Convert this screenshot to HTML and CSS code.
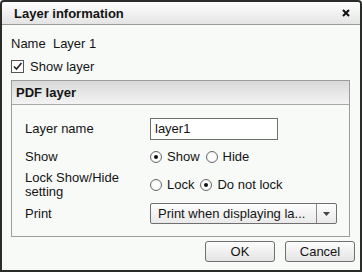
FILE: index.html
```html
<!DOCTYPE html>
<html>
<head>
<meta charset="utf-8">
<link rel="stylesheet" href="styles.css">
</head>
<body>
<div class="dialog">
  <div class="titlebar">
    <span class="title">Layer information</span>
    <svg class="close" width="8" height="8" viewBox="0 0 8 8"><path d="M1 1L7 7M7 1L1 7" stroke="#111" stroke-width="2"/></svg>
  </div>
  <div class="content">
    <div class="namerow">Name&nbsp;&nbsp;Layer 1</div>
    <div class="checkrow">
      <svg class="checkbox" width="13" height="13" viewBox="0 0 13 13"><rect x="0.5" y="0.5" width="12" height="12" fill="#fff" stroke="#555"/><path d="M3 6.5L5.5 9L10.5 3" fill="none" stroke="#222" stroke-width="1.6"/></svg>
      <span>Show layer</span>
    </div>
    <div class="group">
      <div class="group-head">PDF layer</div>
      <div class="group-body">
        <div class="row r1"><div class="label">Layer name</div><div class="textbox">layer1</div></div>
        <div class="row r2"><div class="label">Show</div>
          <div class="radios"><span class="radio on"></span><span class="rlabel">Show</span><span class="radio"></span><span class="rlabel">Hide</span></div>
        </div>
        <div class="row r3"><div class="label two">Lock Show/Hide<br>setting</div>
          <div class="radios"><span class="radio"></span><span class="rlabel">Lock</span><span class="radio on"></span><span class="rlabel">Do not lock</span></div>
        </div>
        <div class="row r4"><div class="label">Print</div>
          <div class="select"><span class="seltext">Print when displaying la...</span><span class="arrow"><svg width="7" height="4" viewBox="0 0 7 4"><path d="M0 0H7L3.5 4Z" fill="#444"/></svg></span></div>
        </div>
      </div>
    </div>
    <div class="buttons">
      <div class="btn">OK</div>
      <div class="btn">Cancel</div>
    </div>
  </div>
</div>
</body>
</html>
```
FILE: styles.css
```css
html, body { margin: 0; padding: 0; background: #fff; }
.dialog {
  width: 362px; height: 272px; box-sizing: border-box;
  border: 2px solid #2a2c2a; border-radius: 4px 4px 0 0;
  background: #f8faf8;
  font-family: "Liberation Sans", Arial, sans-serif; font-size: 13px; color: #141414;
  display: flex; flex-direction: column;
}
.titlebar {
  height: 22px; border-bottom: 1px solid #9a9a9a;
  background: linear-gradient(#fefefe, #e4e4e4);
  display: flex; align-items: center; justify-content: space-between;
  padding: 0 10px 0 12px; border-radius: 3px 3px 0 0;
}
.title { font-weight: bold; font-size: 13px; line-height: 16px; padding-top: 1px; }
.close { display: block; margin-top: -1px; }
.content { padding: 0 3px 0 9px; display: flex; flex-direction: column; }
.namerow { line-height: 16px; margin-top: 11px; }
.checkrow { display: flex; align-items: center; gap: 6px; margin-top: 6px; height: 16px; }
.checkbox { display: block; }
.group { margin-top: 6px; width: 339px; box-sizing: border-box; border: 1px solid #9c9c9c; }
.group-head {
  height: 23px; border-bottom: 1px solid #a8a8a8; box-sizing: border-box; height: 24px;
  background: linear-gradient(#d8d9d8, #f2f3f2);
  font-weight: bold; display: flex; align-items: center; padding-left: 4px;
}
.group-body { padding: 13px 12px 12px 13px; display: flex; flex-direction: column; }
.row { display: flex; align-items: center; }
.label { width: 125px; flex: none; line-height: 16px; }
.label.two { line-height: 14px; }
.r1 { height: 22px; }
.r2 { height: 20px; margin-top: 7px; }
.r3 { height: 28px; margin-top: 4px; }
.r4 { height: 21px; margin-top: 4px; }
.textbox {
  width: 128px; height: 22px; box-sizing: border-box; border: 1px solid #6f6f6f;
  background: #fff; padding-left: 4px; line-height: 20px;
}
.radios { display: flex; align-items: center; }
.radio {
  width: 12px; height: 12px; box-sizing: border-box; border-radius: 50%;
  border: 1px solid #6a6a6a; background: radial-gradient(#fff 40%, #e8e8e8);
  display: flex; align-items: center; justify-content: center; flex: none;
}
.radio.on::after { content: ""; width: 4px; height: 4px; border-radius: 50%; background: #111; }
.rlabel { margin-left: 5px; margin-right: 6px; line-height: 16px; }
.select {
  width: 188px; height: 21px; box-sizing: border-box; border: 1px solid #6f6f6f; border-radius: 2px;
  background: linear-gradient(#fdfdfd, #e9e9e9); display: flex; align-items: stretch;
}
.seltext { flex: 1; padding-left: 7px; line-height: 19px; }
.arrow { width: 19px; border-left: 1px solid #8a8a8a; display: flex; align-items: center; justify-content: center; }
.arrow svg { display: block; }
.buttons { display: flex; justify-content: flex-end; gap: 10px; margin-top: 4px; padding-right: 2px; }
.btn {
  width: 70px; height: 21px; box-sizing: border-box; border: 1px solid #707070; border-radius: 3px;
  background: linear-gradient(#fcfcfc, #e4e4e4); text-align: center; line-height: 19px;
}
```
